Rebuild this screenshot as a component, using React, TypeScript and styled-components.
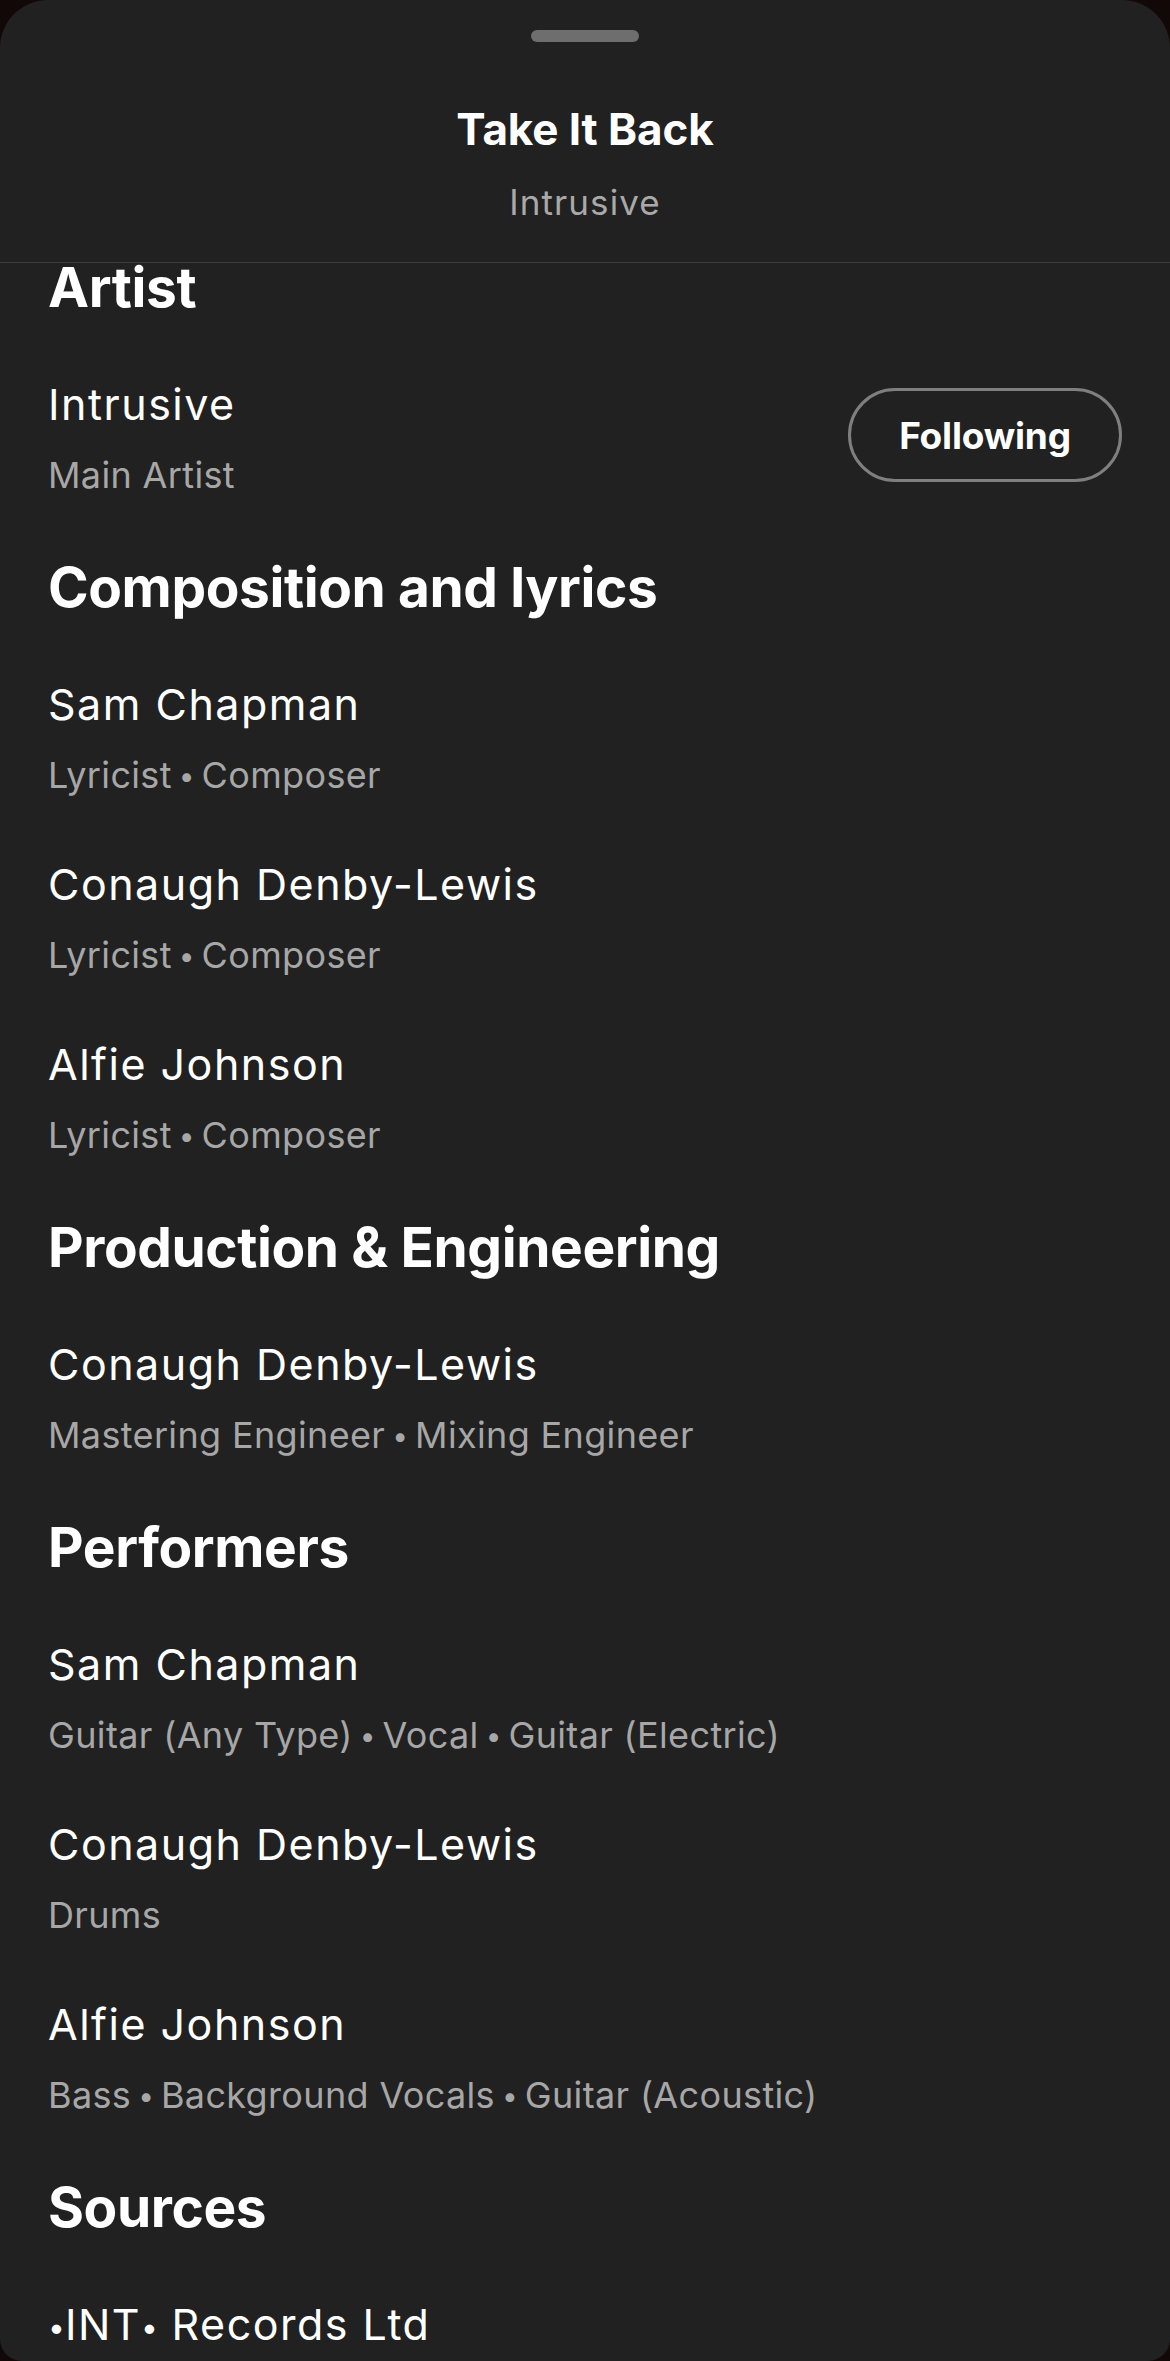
import React from "react";
import styled, { createGlobalStyle } from "styled-components";

const GlobalStyle = createGlobalStyle`
  html, body {
    margin: 0;
    padding: 0;
    background: #130808;
  }
  body {
    font-family: Inter, "Noto Sans", "Liberation Sans", sans-serif;
    -webkit-font-smoothing: antialiased;
  }
  * { box-sizing: border-box; }
`;

const Sheet = styled.div`
  width: 1170px;
  height: 2361px;
  background: #212121;
  border-radius: 48px 48px 22px 22px;
  overflow: hidden;
  display: flex;
  flex-direction: column;
  color: #ffffff;
`;

const Header = styled.header`
  display: flex;
  flex-direction: column;
  align-items: center;
  padding: 30px 48px 35px;
  border-bottom: 1px solid #3d3d3d;
  flex: none;
`;

const Handle = styled.div`
  width: 108px;
  height: 12px;
  border-radius: 6px;
  background: #6e6e6e;
`;

const Title = styled.h1`
  margin: 57px 0 0;
  font-size: 44px;
  line-height: 60px;
  font-weight: 700;
  letter-spacing: -0.1px;
`;

const Subtitle = styled.div`
  margin-top: 18px;
  font-size: 35px;
  line-height: 50px;
  font-weight: 400;
  letter-spacing: 1.1px;
  color: #a9a9a9;
`;

const Scroll = styled.main`
  flex: 1;
  padding: 0 48px;
`;

const Sections = styled.div`
  display: flex;
  flex-direction: column;
  gap: 64px;
`;

const Section = styled.section`
  display: flex;
  flex-direction: column;
`;

const Heading = styled.h2`
  margin: 0;
  font-size: 55px;
  line-height: 48px;
  font-weight: 700;
  letter-spacing: -0.4px;
`;

const Rows = styled.div`
  margin-top: 65px;
  display: flex;
  flex-direction: column;
  gap: 57px;
`;

const Row = styled.div`
  display: flex;
  align-items: center;
  justify-content: space-between;
`;

const Info = styled.div`
  display: flex;
  flex-direction: column;
  gap: 19px;
`;

const Name = styled.div`
  font-size: 43px;
  line-height: 56px;
  font-weight: 400;
  letter-spacing: 1.5px;
`;

const NameDot = styled.span`
  font-size: 30px;
  line-height: 0;
  letter-spacing: 0;
  vertical-align: 2px;
`;

const Role = styled.div`
  font-size: 36px;
  line-height: 48px;
  font-weight: 400;
  letter-spacing: 0.35px;
  color: #a7a7a7;
`;

const Dot = styled.span`
  font-size: 28px;
  line-height: 0;
  margin: 0 7px;
  letter-spacing: 0;
  vertical-align: 2px;
`;

const FollowButton = styled.button`
  width: 274px;
  height: 94px;
  margin-bottom: 5px;
  border: 3px solid #7f7f7f;
  border-radius: 47px;
  background: transparent;
  color: #ffffff;
  font-family: Inter, "Noto Sans", "Liberation Sans", sans-serif;
  font-size: 37px;
  font-weight: 700;
  letter-spacing: -0.2px;
  display: flex;
  align-items: center;
  justify-content: center;
  padding: 0;
  cursor: pointer;
`;

type Credit = { name: string; roles: string[]; follow?: boolean };
type Group = { title: string; credits: Credit[] };

const groups: Group[] = [
  {
    title: "Artist",
    credits: [{ name: "Intrusive", roles: ["Main Artist"], follow: true }],
  },
  {
    title: "Composition and lyrics",
    credits: [
      { name: "Sam Chapman", roles: ["Lyricist", "Composer"] },
      { name: "Conaugh Denby-Lewis", roles: ["Lyricist", "Composer"] },
      { name: "Alfie Johnson", roles: ["Lyricist", "Composer"] },
    ],
  },
  {
    title: "Production & Engineering",
    credits: [
      {
        name: "Conaugh Denby-Lewis",
        roles: ["Mastering Engineer", "Mixing Engineer"],
      },
    ],
  },
  {
    title: "Performers",
    credits: [
      {
        name: "Sam Chapman",
        roles: ["Guitar (Any Type)", "Vocal", "Guitar (Electric)"],
      },
      { name: "Conaugh Denby-Lewis", roles: ["Drums"] },
      {
        name: "Alfie Johnson",
        roles: ["Bass", "Background Vocals", "Guitar (Acoustic)"],
      },
    ],
  },
  {
    title: "Sources",
    credits: [{ name: "•INT• Records Ltd", roles: [] }],
  },
];

function NameText({ text }: { text: string }) {
  const parts = text.split("•");
  return (
    <Name>
      {parts.map((p, i) => (
        <React.Fragment key={i}>
          {i > 0 && <NameDot>•</NameDot>}
          {p}
        </React.Fragment>
      ))}
    </Name>
  );
}

function Roles({ roles }: { roles: string[] }) {
  return (
    <Role>
      {roles.map((r, i) => (
        <React.Fragment key={i}>
          {i > 0 && <Dot>•</Dot>}
          {r}
        </React.Fragment>
      ))}
    </Role>
  );
}

export default function App() {
  return (
    <>
      <GlobalStyle />
      <Sheet>
        <Header>
          <Handle />
          <Title>Take It Back</Title>
          <Subtitle>Intrusive</Subtitle>
        </Header>
        <Scroll>
          <Sections>
            {groups.map((g) => (
              <Section key={g.title}>
                <Heading>{g.title}</Heading>
                <Rows>
                  {g.credits.map((c, i) => (
                    <Row key={i}>
                      <Info>
                        <NameText text={c.name} />
                        {c.roles.length > 0 && <Roles roles={c.roles} />}
                      </Info>
                      {c.follow && <FollowButton>Following</FollowButton>}
                    </Row>
                  ))}
                </Rows>
              </Section>
            ))}
          </Sections>
        </Scroll>
      </Sheet>
    </>
  );
}
